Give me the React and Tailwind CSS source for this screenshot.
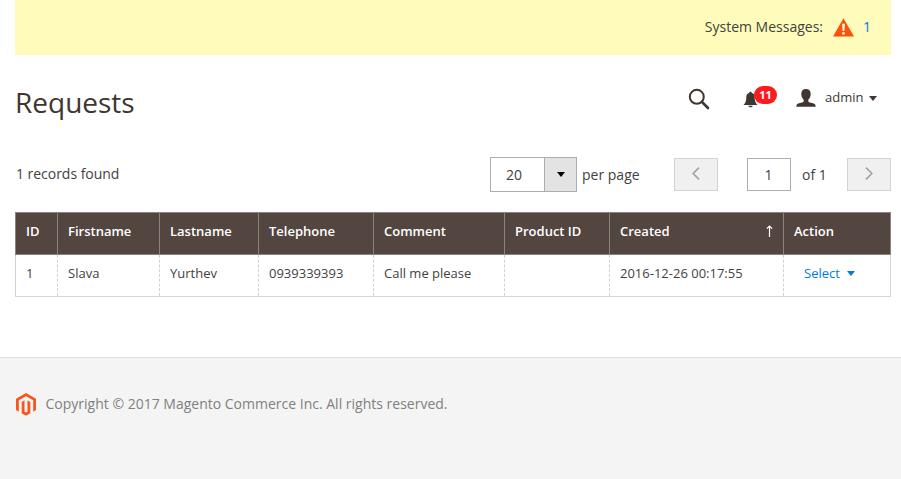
import React from "react";

const columns = ["ID", "Firstname", "Lastname", "Telephone", "Comment", "Product ID", "Created", "Action"];
const record = ["1", "Slava", "Yurthev", "0939339393", "Call me please", "", "2016-12-26 00:17:55"];

const rowGrid = "grid grid-cols-[42px_102px_99px_115px_131px_105px_174px_108px]";

function Caret({ className }) {
  return (
    <svg className={className} viewBox="0 0 8 5" fill="currentColor">
      <path d="M0 0h8L4 5z" />
    </svg>
  );
}

function SystemMessages() {
  return (
    <div className="mx-[15px] mr-[10px] flex h-[55px] items-center justify-end bg-[#fffbbb] pb-[2px] pr-5 text-sm">
      <span>System Messages:</span>
      <svg className="ml-[10px] mt-px h-[19px] w-[21px]" viewBox="0 0 21 19">
        <path d="M10.5 0.3 21 18.5H0z" fill="#fd5108" />
        <path d="M9 5.8h3l-.6 7.2H9.6zM9.2 14.2h2.6v2.2H9.2z" fill="#fffbe0" />
      </svg>
      <a className="ml-[9px] text-[#007bdb]">1</a>
    </div>
  );
}

function Header() {
  return (
    <header className="flex h-[65px] pl-[15px] pr-[24px] text-[#41362f]">
      <h1 className="mt-[28px] flex-1 text-[28px] leading-[38px]">Requests</h1>
      <svg className="mt-[33px] h-[22px] w-[22px]" viewBox="0 0 22 22" fill="none" stroke="currentColor">
        <circle cx="8.8" cy="8.8" r="7" strokeWidth="2" />
        <path d="m14 14 6 6" strokeWidth="2.6" strokeLinecap="round" />
      </svg>
      <div className="ml-[33px] mt-[31px] flex w-[34px]">
        <svg className="mt-[5px] h-[17px] w-[15px] shrink-0" viewBox="0 0 15 17" fill="currentColor">
          <path d="M6.3 1.7C6.3.5 8.7.5 8.7 1.7c2 .6 3 2.3 3 4.3 0 4 .8 6 2.8 8H.5c2-2 2.8-4 2.8-8 0-2 1-3.700 3-4.300zM5.300 14.700h4.400c-.6 2-3.800 2-4.400 0z" />
        </svg>
        <span className="-ml-[4px] flex h-[18px] w-[23px] shrink-0 items-center justify-center rounded-full bg-[#fb1b1e] pb-[2px] text-[11px] font-bold leading-none text-white">
          11
        </span>
      </div>
      <div className="ml-[19px] mt-[33px] flex h-[20px] items-center text-[13px]">
        <svg className="h-[18px] w-[20px]" viewBox="0 0 20 18" fill="currentColor">
          <path d="M10 0c3 0 4.700 1.900 4.700 4.700 0 2.400-.9 4.700-2.400 6v1.300c0 .8.700 1.100 1.600 1.400l3.100.9c2 .6 2.700 1.400 2.700 3.500H.3c0-2.100.700-2.900 2.700-3.500l3.100-.9c.9-.3 1.600-.6 1.600-1.400v-1.300c-1.500-1.300-2.400-3.600-2.400-6C5.300 1.900 7 0 10 0z" />
        </svg>
        <span className="ml-[9px] w-[37px]">admin</span>
        <Caret className="ml-[7px] h-[5px] w-[8px]" />
      </div>
    </header>
  );
}

function PageArrow({ d }) {
  return (
    <button className="flex h-[33px] w-[44px] items-center justify-center border border-[#d2d2d2] bg-[#f0f0f0] text-[#a3a3a3]">
      <svg className="mb-[2px] h-[13px] w-[8px]" viewBox="0 0 8 13" fill="none" stroke="currentColor" strokeWidth="1.7">
        <path d={d} />
      </svg>
    </button>
  );
}

function Toolbar() {
  return (
    <div className="mt-[37px] flex h-[35px] items-center pl-[16px] pr-[10px] text-sm">
      <span className="flex-1 pb-[2px] tracking-[-0.03px]">1 records found</span>
      <div className="flex h-[35px] w-[87px] border border-[#adadad]">
        <span className="flex flex-1 items-center pl-[15px]">20</span>
        <span className="flex w-[32px] items-center justify-center border-l border-[#adadad] bg-[#e3e3e3] text-black">
          <Caret className="h-[5px] w-[8px]" />
        </span>
      </div>
      <span className="ml-[5px] w-[92px]">per page</span>
      <PageArrow d="M7 .7 1.200 6.500 7 12.300" />
      <span className="ml-[29px] flex h-[33px] w-[44px] items-center justify-center border border-[#adadad] pr-px">1</span>
      <span className="ml-[11px] w-[45px]">of 1</span>
      <PageArrow d="m1 .7 5.800 5.800L1 12.300" />
    </div>
  );
}

function RequestsTable() {
  return (
    <div className="ml-[15px] mt-[20px] w-[876px] text-[13px] leading-[18px]">
      <div className={`${rowGrid} h-[43px] border-y border-r border-[#8a837f] bg-[#534640] font-semibold text-white`}>
        {columns.map((name) => (
          <div key={name} className="flex border-l border-[#8a837f] pl-[10px] pr-[9px] pt-[9px]">
            <span className="flex-1 whitespace-nowrap">{name}</span>
            {name === "Created" && (
              <svg className="mt-[3px] h-[12px] w-[9px]" viewBox="0 0 9 12" fill="none" stroke="currentColor" strokeWidth="1.200">
                <path d="M4.500 12V1M1.800 3.700 4.500 1l2.700 2.700" />
              </svg>
            )}
          </div>
        ))}
      </div>
      <div className={`${rowGrid} h-[42px] border-b border-r border-[#d6d6d6]`}>
        {record.map((value, i) => (
          <div
            key={columns[i]}
            className={`whitespace-nowrap border-l border-[#d0d0d0] pl-[10px] pt-[9px] ${i > 0 ? "border-dashed" : ""}`}
          >
            {value}
          </div>
        ))}
        <div className="border-l border-dashed border-[#d0d0d0] pl-[20px] pt-[9px]">
          <a className="flex items-center text-[#007bdb]">
            Select
            <Caret className="ml-[7px] h-[5px] w-[8px]" />
          </a>
        </div>
      </div>
    </div>
  );
}

function Footer() {
  return (
    <footer className="mt-[60px] flex flex-1 items-start border-t border-[#dcdcdc] bg-[#f4f4f4] pl-[16px] pt-[35px] text-sm text-[#808080]">
      <svg className="h-[23px] w-[20px]" viewBox="0 0 20 23" fill="#f4571b">
        <path d="M10 0 20 5.700v11.400l-2.800 1.600V7.300L10 3.200 2.800 7.300v11.400L0 17.100V5.700z" />
        <path d="M5.700 8.900 8.500 7.300v11.400l1.500.9 1.500-.9V7.300l2.800 1.600v11.400L10 22.800l-4.300-2.500z" />
      </svg>
      <span className="ml-[9.5px] mt-px leading-[20px]">Copyright © 2017 Magento Commerce Inc. All rights reserved.</span>
    </footer>
  );
}

export default function App() {
  return (
    <div className="flex h-[479px] w-[901px] flex-col overflow-hidden bg-white font-['Open_Sans','Noto_Sans',sans-serif] text-[#41423f]">
      <SystemMessages />
      <Header />
      <Toolbar />
      <RequestsTable />
      <Footer />
    </div>
  );
}
